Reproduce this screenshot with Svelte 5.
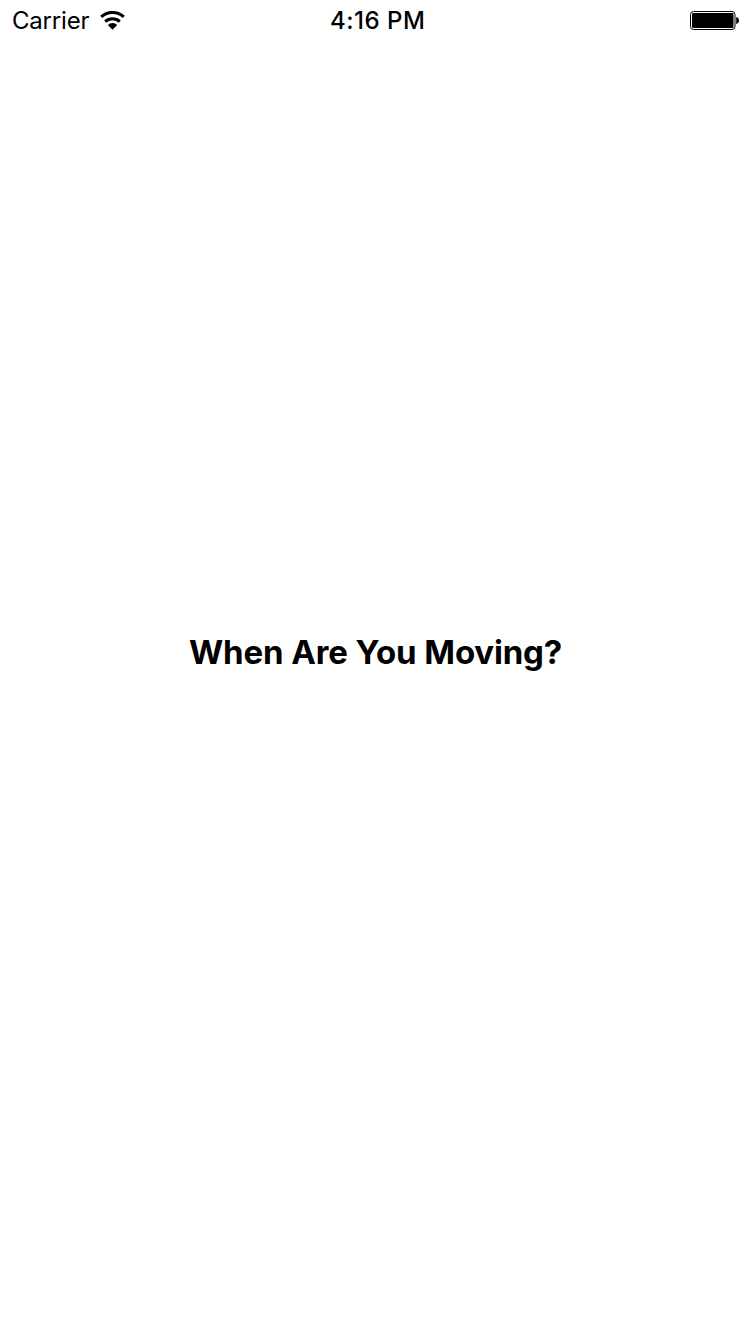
<script>
  const carrier = 'Carrier';
  const time = '4:16 PM';
  const question = 'When Are You Moving?';
</script>

<div class="screen">
  <header class="status">
    <div class="left">
      <span class="carrier">{carrier}</span>
      <svg class="wifi" width="26" height="20" viewBox="0 0 26 20" aria-hidden="true">
        <path d="M1.2 5.9A16.6 16.6 0 0 1 23.8 5.9" fill="none" stroke="#000" stroke-width="3.1" />
        <path d="M5.2 10.7A10.6 10.6 0 0 1 19.8 10.7" fill="none" stroke="#000" stroke-width="3" />
        <path d="M12.5 18.7L7.8 14A6.6 6.6 0 0 1 17.2 14Z" />
      </svg>
    </div>
    <span class="time">{time}</span>
    <svg class="battery" width="50" height="20" viewBox="0 0 50 20" aria-hidden="true">
      <rect x="0.5" y="0.5" width="44.5" height="18" rx="3" fill="none" stroke="#000" />
      <rect x="2" y="2" width="41.5" height="15" rx="1" />
      <path d="M46.2 6C49.9 6.6 49.9 12.4 46.2 13Z" />
    </svg>
  </header>
  <main><h1>{question}</h1></main>
</div>

<style>
  :global(body) { margin: 0; background: #fff; }
  .screen { display: flex; flex-direction: column; height: 1334px; color: #000; font-family: Inter, Roboto, sans-serif; }
  .status { display: grid; grid-template-columns: 1fr auto 1fr; align-items: center; height: 42px; padding: 0 10px 0 12px; }
  .left { display: flex; align-items: center; gap: 10.4px; }
  .carrier, .time { font-size: 24px; line-height: 42px; white-space: nowrap; }
  .carrier { letter-spacing: -0.2px; }
  .time { font-weight: 550; letter-spacing: 0.5px; padding-left: 3.5px; }
  .battery { justify-self: end; }
  main { flex: 1; display: flex; justify-content: center; padding-top: 588px; }
  h1 { margin: 0; padding-left: 1px; font-size: 33px; line-height: 44px; font-weight: 700; letter-spacing: -0.2px; word-spacing: 0.4px; height: 44px; white-space: nowrap; }
</style>
